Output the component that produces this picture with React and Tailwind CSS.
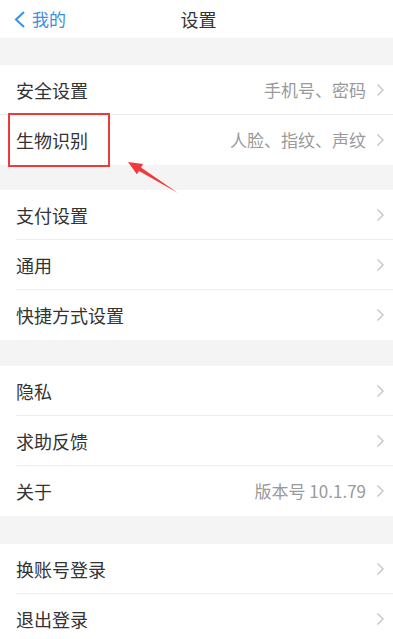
import React from 'react';

const font = { fontFamily: '"Noto Sans CJK SC", "Noto Sans", sans-serif' };

const groups = [
  { full: true, rows: [{ label: '安全设置', value: '手机号、密码' }, { label: '生物识别', value: '人脸、指纹、声纹' }] },
  { rows: [{ label: '支付设置' }, { label: '通用' }, { label: '快捷方式设置' }] },
  { rows: [{ label: '隐私' }, { label: '求助反馈' }, { label: '关于', value: '版本号 10.1.79' }] },
  { rows: [{ label: '换账号登录' }, { label: '退出登录' }] },
];

function Chevron() {
  return (
    <svg width="9" height="14" viewBox="0 0 9 14" className="shrink-0">
      <path d="M1.5 1.5 L7 7 L1.5 12.5" fill="none" stroke="#c4c4c8" strokeWidth="1.4" />
    </svg>
  );
}

function Row({ label, value, last, full }) {
  return (
    <div className="relative h-[50px] flex items-center pl-4 pr-[8px] bg-white">
      <span className="text-[18px] text-[#333] flex-1">{label}</span>
      {value && <span className="text-[17px] text-[#9a9a9a] mr-[10px]">{value}</span>}
      <Chevron />
      {!last && <div className={`absolute bottom-0 right-0 h-px bg-[#ececec] ${full ? 'left-0' : 'left-4'}`}></div>}
    </div>
  );
}

export default function App() {
  return (
    <div className="relative w-[393px] h-[639px] overflow-hidden bg-[#f4f4f4]" style={font}>
      {/* header */}
      <div className="h-[38px] bg-white flex items-center relative">
        <div className="flex items-center pl-[13px] text-[#3d8fe0]">
          <svg width="14" height="20" viewBox="0 0 14 20">
            <path d="M11 3 L3 10.5 L11 18" fill="none" stroke="#3d8fe0" strokeWidth="2" />
          </svg>
          <span className="text-[17px] ml-[5px]">我的</span>
        </div>
        <span className="absolute left-1/2 -translate-x-1/2 ml-[2px] text-[18px] text-[#333]">设置</span>
      </div>

      <div className="flex flex-col">
        <div className="h-[27px]"></div>
        {groups.map((g, gi) => (
          <React.Fragment key={gi}>
            <div>
              {g.rows.map((r, i) => (
                <Row key={i} {...r} full={g.full} last={i === g.rows.length - 1} />
              ))}
            </div>
            {gi < groups.length - 1 && <div className={gi === 2 ? 'h-[28px]' : gi === 1 ? 'h-[26px]' : 'h-[25px]'}></div>}
          </React.Fragment>
        ))}
      </div>

      {/* annotation */}
      <div className="absolute left-[8px] top-[113px] w-[102px] h-[54px] border-2 border-[#f03a3a]"></div>
      <svg className="absolute left-0 top-0" width="393" height="639">
        <polygon points="178,193 141,167.5 143.1,164.1 128,162 136.9,174.3 139,170.9" fill="#f03a3a" />
      </svg>
    </div>
  );
}
